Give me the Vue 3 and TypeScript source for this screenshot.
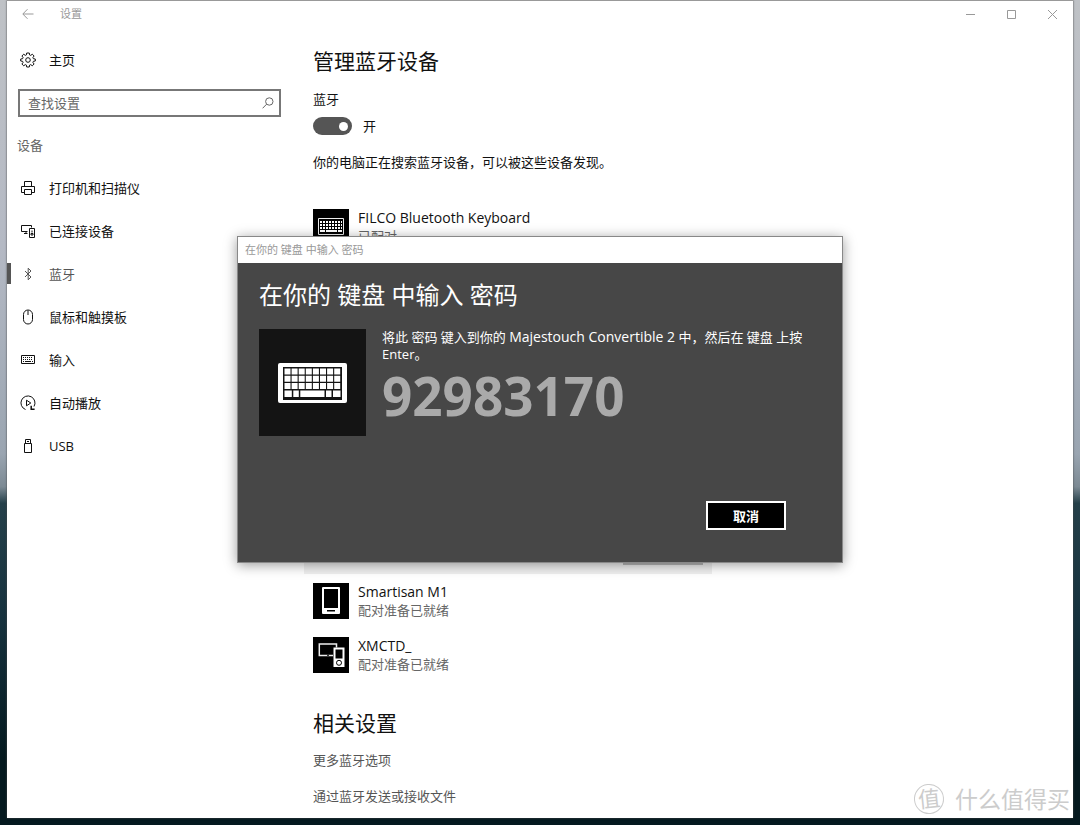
<script setup lang="ts">
import { ref } from 'vue'

type IconName = 'printer' | 'connected' | 'bluetooth' | 'mouse' | 'keyboard' | 'autoplay' | 'usb'

interface NavItem {
  icon: IconName
  label: string
  active?: boolean
}

interface Device {
  kind: 'keyboard' | 'phone' | 'multi'
  name: string
  status: string
}

const navItems: NavItem[] = [
  { icon: 'printer', label: '打印机和扫描仪' },
  { icon: 'connected', label: '已连接设备' },
  { icon: 'bluetooth', label: '蓝牙', active: true },
  { icon: 'mouse', label: '鼠标和触摸板' },
  { icon: 'keyboard', label: '输入' },
  { icon: 'autoplay', label: '自动播放' },
  { icon: 'usb', label: 'USB' },
]

const paired: Device[] = [
  { kind: 'keyboard', name: 'FILCO Bluetooth Keyboard', status: '已配对' },
]

const available: Device[] = [
  { kind: 'phone', name: 'Smartisan M1', status: '配对准备已就绪' },
  { kind: 'multi', name: 'XMCTD_', status: '配对准备已就绪' },
]

const related: string[] = ['更多蓝牙选项', '通过蓝牙发送或接收文件']

const query = ref('')
const bluetoothOn = ref(true)
const passcode = '92983170'
</script>

<template>
  <div class="desktop">
    <div class="window">
      <header class="titlebar">
        <button class="back" aria-label="返回">
          <svg width="12" height="12" viewBox="0 0 12 12"><path d="M11.5 6H1M5.5 1.2 .8 6l4.700 4.800" /></svg>
        </button>
        <span class="app-name">设置</span>
        <div class="caption-buttons">
          <button aria-label="最小化"><svg width="11" height="11" viewBox="0 0 11 11"><path d="M1 5.500h9" /></svg></button>
          <button aria-label="最大化"><svg width="11" height="11" viewBox="0 0 11 11"><path d="M1.500 1.500h8v8h-8z" /></svg></button>
          <button aria-label="关闭"><svg width="11" height="11" viewBox="0 0 11 11"><path d="M1 1l9 9M10 1l-9 9" /></svg></button>
        </div>
      </header>

      <div class="columns">
        <aside class="sidebar">
          <a class="nav-link home" href="#home">
            <svg class="nav-icon" viewBox="0 0 16 16">
              <path d="M6.700 1h2.600l.3 1.900 1.100.5 1.600-1.200 1.800 1.800-1.200 1.600.5 1.100 1.900.3v2l-1.900.3-.5 1.100 1.200 1.600-1.800 1.800-1.600-1.200-1.100.5-.3 1.900H6.700l-.3-1.900-1.100-.5-1.600 1.200-1.800-1.800 1.200-1.600-.5-1.100L.7 9V7l1.900-.3.5-1.100L1.900 4l1.800-1.800 1.600 1.200 1.100-.5z" />
              <circle cx="8" cy="8" r="2.300" />
            </svg>
            <span>主页</span>
          </a>

          <div class="search">
            <input v-model="query" type="text" placeholder="查找设置" aria-label="查找设置" />
            <svg width="12" height="12" viewBox="0 0 12 12"><circle cx="7.300" cy="4.500" r="3.700" /><path d="M4.600 7.200.6 11.300" /></svg>
          </div>

          <h2 class="group">设备</h2>

          <nav>
            <a
              v-for="item in navItems"
              :key="item.icon"
              class="nav-link"
              :class="{ active: item.active }"
              :href="'#' + item.icon"
            >
              <svg v-if="item.icon === 'printer'" class="nav-icon" viewBox="0 0 16 16">
                <path d="M4.500 6.500V1.500h7v5M4.500 12.500h-3v-6h13v6h-3M4.500 9.500h7v5h-7z" />
              </svg>
              <svg v-else-if="item.icon === 'connected'" class="nav-icon" viewBox="0 0 16 16">
                <path d="M7.500 8.500h-6v-6h10v2M4 10.500h3.500M6 8.500v2M9.500 5.500h5v9h-5z" />
                <path d="M12 7.500v2M11 12h2v-1.500h-2z" />
              </svg>
              <svg v-else-if="item.icon === 'bluetooth'" class="nav-icon" viewBox="0 0 16 16">
                <path d="M5 5l6 6-2.800 2.800V2.200L11 5l-6 6" />
              </svg>
              <svg v-else-if="item.icon === 'mouse'" class="nav-icon" viewBox="0 0 16 16">
                <path d="M3.500 5.500a4 4 0 0 1 9 0v5a4 4 0 0 1-9 0zM8 1.500v4.500" />
              </svg>
              <svg v-else-if="item.icon === 'keyboard'" class="nav-icon" viewBox="0 0 16 16">
                <path d="M1.500 3.500h13v8h-13z" />
                <path d="M3 5.500h10M3 7.500h10" stroke-dasharray="1 1" />
                <path d="M3 9.500h1M5 9.500h6M12 9.500h1" />
              </svg>
              <svg v-else-if="item.icon === 'autoplay'" class="nav-icon" viewBox="0 0 16 16">
                <path d="M5.500 14.500A7 7 0 1 1 14 11.500M6.500 5.200v5.600L10.800 8z" />
                <path d="M11.200 10.800v3.400h3.400" stroke-width="1.500" />
              </svg>
              <svg v-else class="nav-icon" viewBox="0 0 16 16">
                <path d="M5.500 5.500v-4h5v4M4.500 5.500h7v9h-7z" />
                <path d="M7 3.500h2" />
              </svg>
              <span>{{ item.label }}</span>
            </a>
          </nav>
        </aside>

        <main class="content">
          <h1>管理蓝牙设备</h1>
          <label class="field-label" for="bt-toggle">蓝牙</label>
          <div class="toggle-row">
            <input id="bt-toggle" v-model="bluetoothOn" class="toggle" type="checkbox" role="switch" />
            <span>{{ bluetoothOn ? '开' : '关' }}</span>
          </div>
          <p class="hint">你的电脑正在搜索蓝牙设备，可以被这些设备发现。</p>

          <ul class="devices">
            <li v-for="device in paired" :key="device.name" class="device">
              <svg class="device-icon" viewBox="0 0 36 36">
                <path class="tile" d="M0 0h36v36H0z" />
                <path class="line" d="M5.500 9.500h25v16h-25z" />
                <path class="keys" d="M7 12h22v11H7z" />
                <path class="gaps" d="M7 14.500h22M7 17.500h22M7 20.500h22M9.500 12v8.500M12.500 12v11M15.500 12v8.500M18.500 12v8.500M21.500 12v8.500M24.500 12v11M27.500 12v8.500" />
              </svg>
              <div>
                <div class="device-name">{{ device.name }}</div>
                <div class="device-status">{{ device.status }}</div>
              </div>
            </li>
            <li class="device pairing">
              <button class="pairing-button" aria-label="取消"></button>
            </li>
            <li v-for="device in available" :key="device.name" class="device">
              <svg class="device-icon" viewBox="0 0 36 36">
                <path class="tile" d="M0 0h36v36H0z" />
                <template v-if="device.kind === 'phone'">
                  <path class="solid" fill-rule="evenodd" d="M10 4h16a1 1 0 0 1 1 1v25a1 1 0 0 1-1 1H10a1 1 0 0 1-1-1V5a1 1 0 0 1 1-1zM11 6v19h14V6zM14 27v1.500h8V27z" />
                </template>
                <template v-else>
                  <path class="line thick" d="M20 18.500H6.300V7h17.200v3.500" />
                  <path class="tile" d="M14 17.800h2v1h-2z" />
                  <path class="solid" fill-rule="evenodd" d="M20.500 10.500h11v19.500h-11zM22.500 12.500v9h7v-9z" />
                  <circle class="dial" cx="26" cy="25.800" r="2.500" />
                </template>
              </svg>
              <div>
                <div class="device-name">{{ device.name }}</div>
                <div class="device-status">{{ device.status }}</div>
              </div>
            </li>
          </ul>

          <h1>相关设置</h1>
          <a v-for="link in related" :key="link" class="related-link" href="#related">{{ link }}</a>
        </main>
      </div>

      <div class="watermark" aria-hidden="true">
        <span class="seal">值</span>
        <span>什么值得买</span>
      </div>
    </div>

    <div class="overlay">
      <section class="dialog" role="dialog" aria-labelledby="dialog-title">
        <div class="dialog-caption">在你的 键盘 中输入 密码</div>
        <div class="dialog-body">
          <h2 id="dialog-title">在你的 键盘 中输入 密码</h2>
          <div class="dialog-main">
            <svg class="dialog-icon" viewBox="0 0 107 107">
              <path class="dark" d="M0 0h107v107H0z" />
              <rect class="solid" x="19" y="34" width="69" height="40" rx="2" />
              <path class="dark" d="M24 38h59v33H24z" />
              <path class="solid" d="M25.500 39.500h6v6h-6zM32.600 39.500h6v6h-6zM39.700 39.500h6v6h-6zM46.800 39.500h6v6h-6zM53.900 39.500h6v6h-6zM61 39.500h6v6h-6zM68.100 39.500h6v6h-6zM75.200 39.500h6v6h-6zM25.500 46.800h6v6h-6zM32.600 46.800h6v6h-6zM39.700 46.800h6v6h-6zM46.800 46.800h6v6h-6zM53.900 46.800h6v6h-6zM61 46.800h6v6h-6zM68.100 46.800h6v6h-6zM75.200 46.800h6v6h-6zM25.500 54.100h6v6h-6zM32.600 54.100h6v6h-6zM39.700 54.100h6v6h-6zM46.800 54.100h6v6h-6zM53.900 54.100h6v6h-6zM61 54.100h6v6h-6zM68.100 54.100h6v6h-6zM75.200 54.100h6v6h-6zM25.500 61.500h7.300v6.500h-7.300zM34.300 61.500h5.500v6.500h-5.500zM41.300 61.500h24.200v6.500H41.300zM67 61.500h5.500v6.500H67zM74 61.500h7.500v6.500H74z" />
            </svg>
            <div class="dialog-text">
              <p>将此 密码 键入到你的 <span class="target">Majestouch Convertible 2</span> 中，然后在 键盘 上按 Enter。</p>
              <output class="passcode">{{ passcode }}</output>
            </div>
          </div>
          <div class="dialog-actions">
            <button class="cancel">取消</button>
          </div>
        </div>
      </section>
    </div>
  </div>
</template>

<style>
body {
  margin: 0;
}
</style>

<style scoped>
* {
  box-sizing: border-box;
}

.desktop {
  position: relative;
  min-height: 100vh;
  padding: 0 7px 7px;
  display: flex;
  background: linear-gradient(#bfc2c6 0, #b4b9c4 30%, #9aa5b1 55%, #7c8a94 59%, #25404a 61%, #16323e 75%, #04191f 92%, #04191f);
  font-family: 'Open Sans', 'Noto Sans CJK SC', sans-serif;
  font-size: 13px;
  line-height: 18px;
  color: #111;
}

h1,
h2,
p,
ul {
  margin: 0;
  padding: 0;
  font-weight: 400;
  list-style: none;
}

button {
  padding: 0;
  border: 0;
  background: none;
  font: inherit;
  color: inherit;
}

a {
  color: inherit;
  text-decoration: none;
}

svg {
  display: block;
  flex: none;
  fill: none;
  stroke: currentColor;
}

.window {
  position: relative;
  flex: 1;
  min-width: 0;
  border-top: 1px solid #999;
  background: #fff;
  box-shadow: 0 0 2px #444;
}

.titlebar {
  display: flex;
  align-items: center;
  height: 26px;
  padding-left: 15px;
  color: #999;
  font-size: 11px;
}

.app-name {
  flex: 1;
  margin-left: 26px;
}

.caption-buttons {
  display: flex;
}

.caption-buttons button {
  display: grid;
  place-items: center;
  width: 41px;
  height: 26px;
}

.columns {
  display: flex;
}

.sidebar {
  flex: none;
  width: 28%;
  max-width: 298px;
  padding-top: 11px;
}

.nav-link {
  position: relative;
  display: flex;
  align-items: center;
  gap: 13px;
  height: 43px;
  padding-left: 13px;
}

.nav-icon {
  width: 16px;
  height: 16px;
}

.nav-link.active {
  color: #555;
}

.nav-link.active::before {
  content: '';
  position: absolute;
  left: 0;
  top: 11px;
  width: 4px;
  height: 21px;
  background: #555;
}

.search {
  display: flex;
  align-items: center;
  height: 28px;
  margin: 8px 24px 0 11px;
  padding: 0 5px 0 8px;
  border: 2px solid #777;
  color: #666;
}

.search input {
  flex: 1;
  min-width: 0;
  padding: 0;
  border: 0;
  outline: 0;
  background: none;
  font: inherit;
  color: #111;
}

.search input::placeholder {
  color: #666;
  opacity: 1;
}

.group {
  margin: 19px 0 12px 10px;
  font-size: 13px;
  color: #666;
}

.content {
  flex: 1;
  min-width: 0;
  padding: 17px 8px 12px;
}

h1 {
  font-size: 21px;
  line-height: 34px;
}

.field-label {
  display: block;
  margin-top: 12px;
}

.toggle-row {
  display: flex;
  align-items: center;
  gap: 11px;
  margin-top: 9px;
}

.toggle {
  appearance: none;
  display: flex;
  align-items: center;
  width: 39px;
  height: 18px;
  margin: 0;
  padding: 0 4px;
  border-radius: 9px;
  background: #999;
}

.toggle::before {
  content: '';
  width: 9px;
  height: 9px;
  border-radius: 50%;
  background: #fff;
}

.toggle:checked {
  justify-content: flex-end;
  background: #555;
}

.hint {
  margin-top: 18px;
}

.devices {
  margin: 29px 0 24px -9px;
}

.device {
  display: flex;
  gap: 9px;
  padding: 9px;
}

.device-icon {
  width: 36px;
  height: 36px;
}

.tile {
  fill: #000;
  stroke: none;
}

.line {
  stroke: #eee;
}

.thick {
  stroke-width: 1.5;
}

.keys,
.solid {
  fill: #fff;
  stroke: none;
}

.gaps,
.dial {
  stroke: #000;
}

.device-name {
  font-size: 14px;
}

.device-status {
  color: #666;
}

.pairing {
  justify-content: flex-end;
  align-items: flex-end;
  width: 408px;
  max-width: 100%;
  height: 100px;
  margin-top: 220px;
  background: #f0f0f0;
}

.pairing-button {
  width: 80px;
  height: 28px;
  background: #b8b8b8;
}

.related-link {
  display: block;
  width: fit-content;
  margin-top: 11px;
  color: #555;
}

.related-link + .related-link {
  margin-top: 18px;
}

.watermark {
  position: absolute;
  right: 3px;
  bottom: 3px;
  display: flex;
  align-items: center;
  gap: 11px;
  font-size: 23px;
  line-height: 32px;
  color: #ccc;
}

.seal {
  width: 30px;
  height: 30px;
  border: 1px solid #ccc;
  border-radius: 50%;
  font-size: 22px;
  line-height: 26px;
  text-align: center;
  transform: rotate(-6deg);
}

.overlay {
  position: absolute;
  inset: 0;
  display: flex;
  justify-content: center;
  align-items: flex-start;
  padding-top: 236px;
}

.dialog {
  width: 90%;
  max-width: 606px;
  border: 1px solid #888;
  background: #474747;
  box-shadow: 0 2px 12px rgba(0, 0, 0, 0.4);
  color: #fff;
}

.dialog-caption {
  padding: 4px 7px;
  background: #fff;
  color: #999;
  font-size: 11px;
}

.dialog-body {
  padding: 14px 21px 32px;
}

.dialog-body h2 {
  font-size: 24px;
  line-height: 36px;
}

.dialog-main {
  display: flex;
  gap: 16px;
  margin-top: 16px;
}

.dialog-icon {
  width: 107px;
  height: 107px;
}

.dark {
  fill: #141414;
  stroke: none;
}

.dialog-text {
  flex: 1;
  min-width: 0;
  line-height: 17px;
}

.target {
  font-size: 14px;
  line-height: 14px;
}

.passcode {
  display: block;
  font-size: 53px;
  font-weight: 700;
  line-height: 66px;
  color: #aaa;
}

.dialog-actions {
  display: flex;
  justify-content: flex-end;
  margin-top: 65px;
  padding-right: 35px;
}

.cancel {
  width: 80px;
  height: 29px;
  border: 2px solid #fff;
  background: #000;
  font-weight: 700;
}
</style>
